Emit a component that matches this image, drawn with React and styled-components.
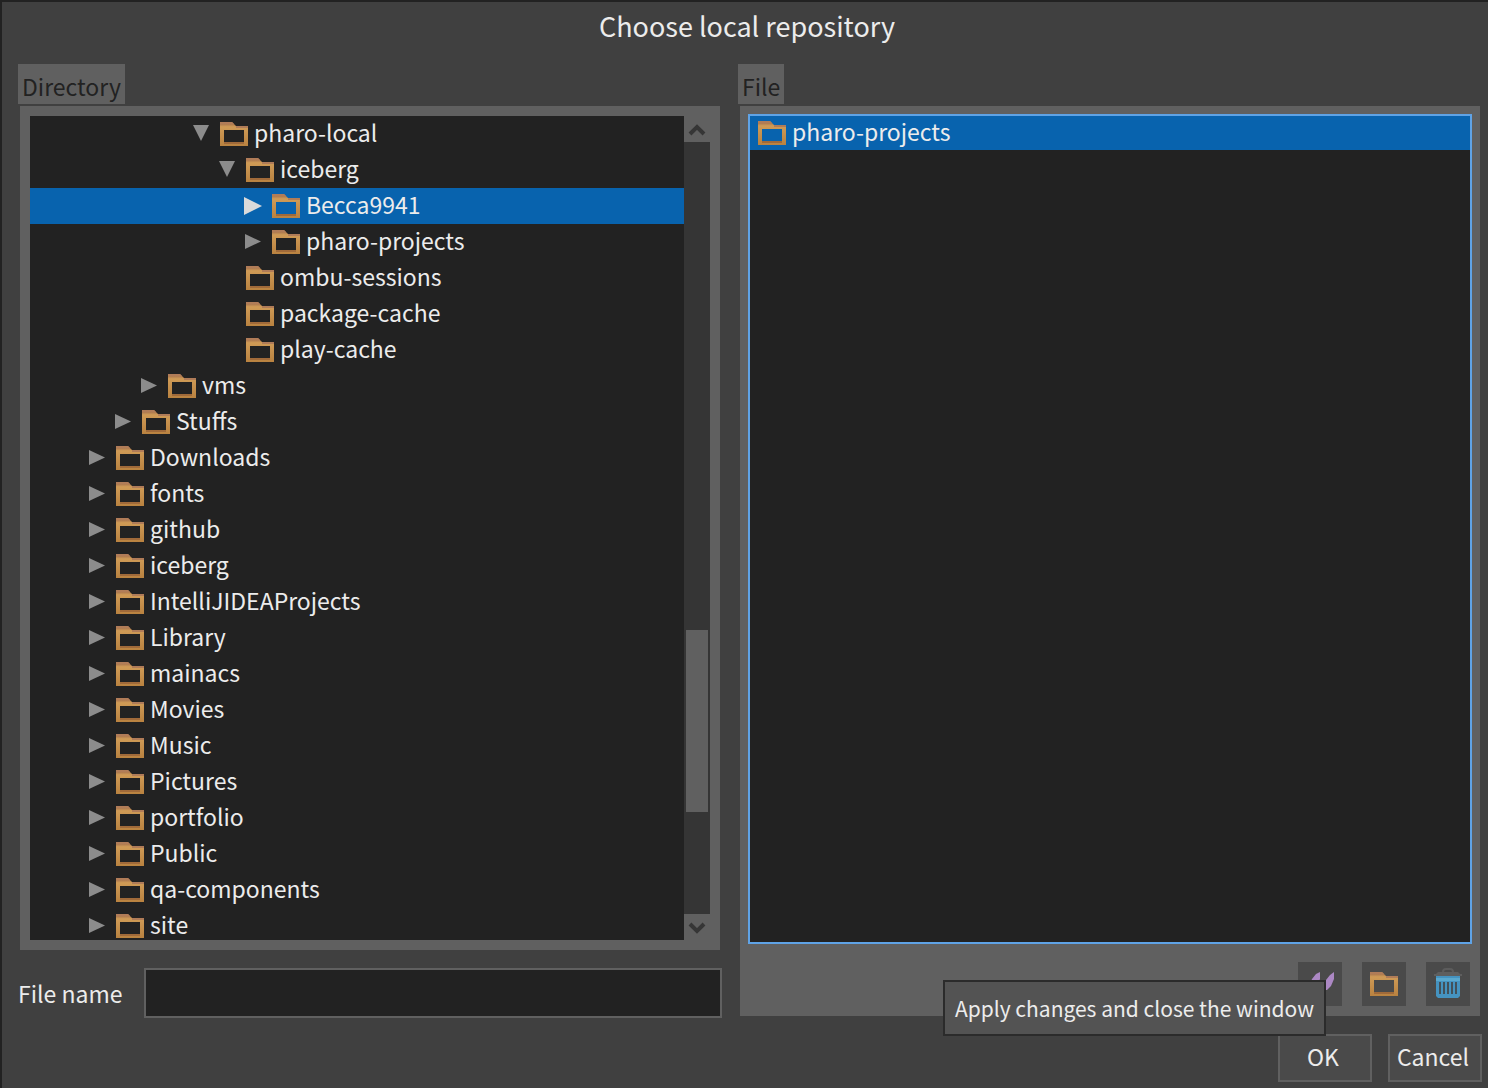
import React, { useId, useState } from "react";
import styled, { createGlobalStyle, css } from "styled-components";

const color = {
  frame: "#222222",
  window: "#404040",
  panel: "#606060",
  list: "#222222",
  track: "#353535",
  button: "#4a4a4a",
  selection: "#0863ae",
  focus: "#5fa3e6",
  text: "#ececec",
  muted: "#222222",
};

const GlobalStyle = createGlobalStyle`
  *, *::before, *::after { box-sizing: border-box; }
  body {
    margin: 0;
    background: ${color.window};
    color: ${color.text};
    font-family: "Noto Sans CJK SC", "Noto Sans", sans-serif;
    font-size: 23px;
    line-height: 36px;
  }
  button, input { font: inherit; color: inherit; }
`;

const Dialog = styled.main`
  display: flex;
  flex-direction: column;
  height: 100vh;
  min-height: 480px;
  padding: 0 6px 6px 16px;
  border: solid ${color.frame};
  border-width: 2px 0 0 2px;
`;

const Title = styled.h1`
  flex: none;
  margin: 0;
  padding: 0 6px 14px 0;
  font-size: 27px;
  font-weight: 400;
  line-height: 48px;
  text-align: center;
`;

const Columns = styled.div`
  flex: 1;
  min-height: 0;
  display: grid;
  grid-template-columns: minmax(0, 88fr) minmax(0, 93fr);
  gap: 16px;
`;

const Column = styled.section`
  display: flex;
  flex-direction: column;
  min-height: 0;
`;

const Tab = styled.h2`
  flex: none;
  align-self: flex-start;
  margin: 0 0 2px;
  padding: 4px 4px 0;
  background: ${color.panel};
  color: ${color.muted};
  font-size: 23px;
  font-weight: 400;
  line-height: 36px;
`;

const Panel = styled.div`
  flex: 1;
  min-height: 0;
  display: flex;
  flex-direction: ${(p) => (p.$stacked ? "column" : "row")};
  margin: 0 2px ${(p) => (p.$stacked ? 2 : 0)}px;
  padding: ${(p) => (p.$stacked ? 8 : 10)}px;
  background: ${color.panel};
`;

const list = css`
  flex: 1;
  min-width: 0;
  min-height: 0;
  margin: 0;
  padding: 0;
  overflow: hidden;
  background: ${color.list};
  list-style: none;
`;

const Tree = styled.ul`
  ${list}
`;

const FileList = styled.ul`
  ${list}
  border: 2px solid ${color.focus};
`;

const Row = styled.li`
  display: flex;
  align-items: center;
  height: 36px;
  padding-left: ${(p) => 58 + p.$level * 26}px;
  background: ${(p) => (p.$selected ? color.selection : "transparent")};
  white-space: nowrap;
  cursor: default;
`;

const FileRow = styled(Row)`
  height: 34px;
  padding-left: 8px;
`;

const RowLabel = styled.span`
  margin: 0 0 4px 6px;
  line-height: 28px;
`;

const Toggle = styled.button`
  flex: none;
  display: flex;
  width: 28px;
  padding: 0;
  border: 0;
  background: none;
  color: ${(p) => (p.$selected ? "#dadada" : "#8c8c8c")};
`;

const ToggleSpace = styled.span`
  flex: none;
  width: 28px;
`;

const ScrollBar = styled.div`
  flex: none;
  display: flex;
  flex-direction: column;
  width: 26px;
`;

const ScrollButton = styled.button`
  display: flex;
  align-items: center;
  justify-content: center;
  height: 26px;
  padding: 0;
  border: 0;
  background: ${color.panel};
`;

const Track = styled.div`
  flex: 1;
  display: grid;
  grid-template-rows: 488fr 182fr 102fr;
  padding: 0 2px;
  background: ${color.track};
`;

const Thumb = styled.div`
  grid-row: 2;
  background: ${color.panel};
`;

const Field = styled.div`
  flex: none;
  display: flex;
  align-items: center;
  margin-top: 18px;
`;

const FieldLabel = styled.label`
  flex: none;
  width: 126px;
`;

const TextBox = styled.input`
  flex: 1;
  min-width: 0;
  height: 50px;
  padding: 0 8px;
  border: 2px solid ${color.panel};
  background: ${color.list};
  outline: none;
`;

const Tools = styled.div`
  flex: none;
  display: flex;
  justify-content: flex-end;
  gap: 20px;
  padding: 18px 2px 2px;
`;

const ToolButton = styled.button`
  display: grid;
  place-items: center;
  width: 44px;
  height: 44px;
  padding: 0;
  border: 0;
  background: ${color.button};
`;

const Actions = styled.footer`
  flex: none;
  display: flex;
  justify-content: flex-end;
  gap: 16px;
  margin-top: 16px;
`;

const ActionSlot = styled.div`
  position: relative;
`;

const ActionButton = styled.button`
  display: block;
  width: 94px;
  height: 48px;
  padding: 0 4px 4px 0;
  border: 2px solid ${color.panel};
  background: ${color.button};
  line-height: 36px;
`;

const Tooltip = styled.div`
  position: absolute;
  right: 46px;
  bottom: 46px;
  padding: 8px 10px;
  border: 2px solid #2b2b2b;
  background: #535353;
  font-size: 21px;
  line-height: 36px;
  white-space: nowrap;
`;

function FolderIcon() {
  const id = useId();
  return (
    <svg width="28" height="24" viewBox="0 0 28 24" fill="none" aria-hidden="true">
      <defs>
        <linearGradient id={id} x1="0" y1="0" x2="0" y2="24" gradientUnits="userSpaceOnUse">
          <stop offset="0.1" stopColor="#b07c50" />
          <stop offset="0.2" stopColor="#cf9b56" />
          <stop offset="1" stopColor="#b98240" />
        </linearGradient>
      </defs>
      <path fill={`url(#${id})`} fillRule="evenodd" d="M0 0h12l4 4h12v20H0zM4 8v12h20V8z" />
      <path fill="#b07c58" d="M0 0h12l2 2H0zM16 4h12v2H16z" />
      <path fill="#a06a3a" d="M4 20h20v2H4z" />
    </svg>
  );
}

function TriangleIcon({ open, large }) {
  if (open) {
    return (
      <svg width="18" height="20" viewBox="0 0 18 20" aria-hidden="true">
        <path fill="currentColor" d="M1 1h16L9 17z" />
      </svg>
    );
  }
  return (
    <svg width="18" height="18" viewBox="0 0 18 18" aria-hidden="true">
      <path fill="currentColor" d={large ? "M0 0l18 9L0 18z" : "M1 1l16 7.500L1 16z"} />
    </svg>
  );
}

function ArrowIcon({ down }) {
  return (
    <svg width="18" height="14" viewBox="0 0 18 14" fill="none" aria-hidden="true">
      <path stroke="#363636" strokeWidth="4" d={down ? "M2 4l7 7 7-7" : "M2 12l7-7 7 7"} />
    </svg>
  );
}

function RenameIcon() {
  return (
    <svg width="28" height="28" viewBox="0 0 28 28" aria-hidden="true">
      <path fill="#ac88c4" d="M14 2l-4 2-4 5-2 5v6h3l4-4 3-7zM28 2l-4 3-4 5-2 4v6h3l4-4 3-7z" />
    </svg>
  );
}

function TrashIcon() {
  return (
    <svg width="28" height="32" viewBox="0 0 28 32" fill="none" aria-hidden="true">
      <path stroke="#5c5c5c" strokeWidth="2" d="M9 4q0-3 3-3h4q3 0 3 3" />
      <path fill="#5e5e5e" d="M4 4h20l2 2h2v2H0V6h2z" />
      <path fill="#4593c0" d="M2 8h24v20l-2 2H4l-2-2z" />
      <path fill="#5aa9cf" d="M2 10h24v3H2z" />
      <path fill="#42515a" d="M5 14h2v12H5zM9 14h2v12H9zM13 14h2v12h-2zM17 14h2v12h-2zM21 14h2v12h-2z" />
    </svg>
  );
}

const folders = [
  ["pharo-local", 4, "open"],
  ["iceberg", 5, "open"],
  ["Becca9941", 6, "closed"],
  ["pharo-projects", 6, "closed"],
  ["ombu-sessions", 5],
  ["package-cache", 5],
  ["play-cache", 5],
  ["vms", 2, "closed"],
  ["Stuffs", 1, "closed"],
  ["Downloads", 0, "closed"],
  ["fonts", 0, "closed"],
  ["github", 0, "closed"],
  ["iceberg", 0, "closed"],
  ["IntelliJIDEAProjects", 0, "closed"],
  ["Library", 0, "closed"],
  ["mainacs", 0, "closed"],
  ["Movies", 0, "closed"],
  ["Music", 0, "closed"],
  ["Pictures", 0, "closed"],
  ["portfolio", 0, "closed"],
  ["Public", 0, "closed"],
  ["qa-components", 0, "closed"],
  ["site", 0, "closed"],
];

function FolderRow({ name, level, state, selected, onSelect }) {
  return (
    <Row role="treeitem" aria-level={level + 1} aria-selected={selected} $level={level} $selected={selected} onClick={onSelect}>
      {state ? (
        <Toggle type="button" aria-label={`Toggle ${name}`} $selected={selected}>
          <TriangleIcon open={state === "open"} large={selected} />
        </Toggle>
      ) : (
        <ToggleSpace />
      )}
      <FolderIcon />
      <RowLabel>{name}</RowLabel>
    </Row>
  );
}

export default function App() {
  const [selected, setSelected] = useState(2);
  const [fileName, setFileName] = useState("");

  return (
    <>
      <GlobalStyle />
      <Dialog>
        <Title>Choose local repository</Title>
        <Columns>
          <Column>
            <Tab>Directory</Tab>
            <Panel>
              <Tree role="tree" aria-label="Directory">
                {folders.map(([name, level, state], i) => (
                  <FolderRow
                    key={i}
                    name={name}
                    level={level}
                    state={state}
                    selected={i === selected}
                    onSelect={() => setSelected(i)}
                  />
                ))}
              </Tree>
              <ScrollBar>
                <ScrollButton type="button" aria-label="Scroll up">
                  <ArrowIcon />
                </ScrollButton>
                <Track>
                  <Thumb />
                </Track>
                <ScrollButton type="button" aria-label="Scroll down">
                  <ArrowIcon down />
                </ScrollButton>
              </ScrollBar>
            </Panel>
            <Field>
              <FieldLabel htmlFor="file-name">File name</FieldLabel>
              <TextBox id="file-name" type="text" value={fileName} onChange={(e) => setFileName(e.target.value)} />
            </Field>
          </Column>
          <Column>
            <Tab>File</Tab>
            <Panel $stacked>
              <FileList role="listbox" aria-label="File">
                <FileRow role="option" aria-selected="true" $level={0} $selected>
                  <FolderIcon />
                  <RowLabel>pharo-projects</RowLabel>
                </FileRow>
              </FileList>
              <Tools>
                <ToolButton type="button" aria-label="Rename">
                  <RenameIcon />
                </ToolButton>
                <ToolButton type="button" aria-label="New folder">
                  <FolderIcon />
                </ToolButton>
                <ToolButton type="button" aria-label="Delete">
                  <TrashIcon />
                </ToolButton>
              </Tools>
            </Panel>
          </Column>
        </Columns>
        <Actions>
          <ActionSlot>
            <ActionButton type="button" aria-describedby="ok-tip">OK</ActionButton>
            <Tooltip id="ok-tip" role="tooltip">Apply changes and close the window</Tooltip>
          </ActionSlot>
          <ActionButton type="button">Cancel</ActionButton>
        </Actions>
      </Dialog>
    </>
  );
}
